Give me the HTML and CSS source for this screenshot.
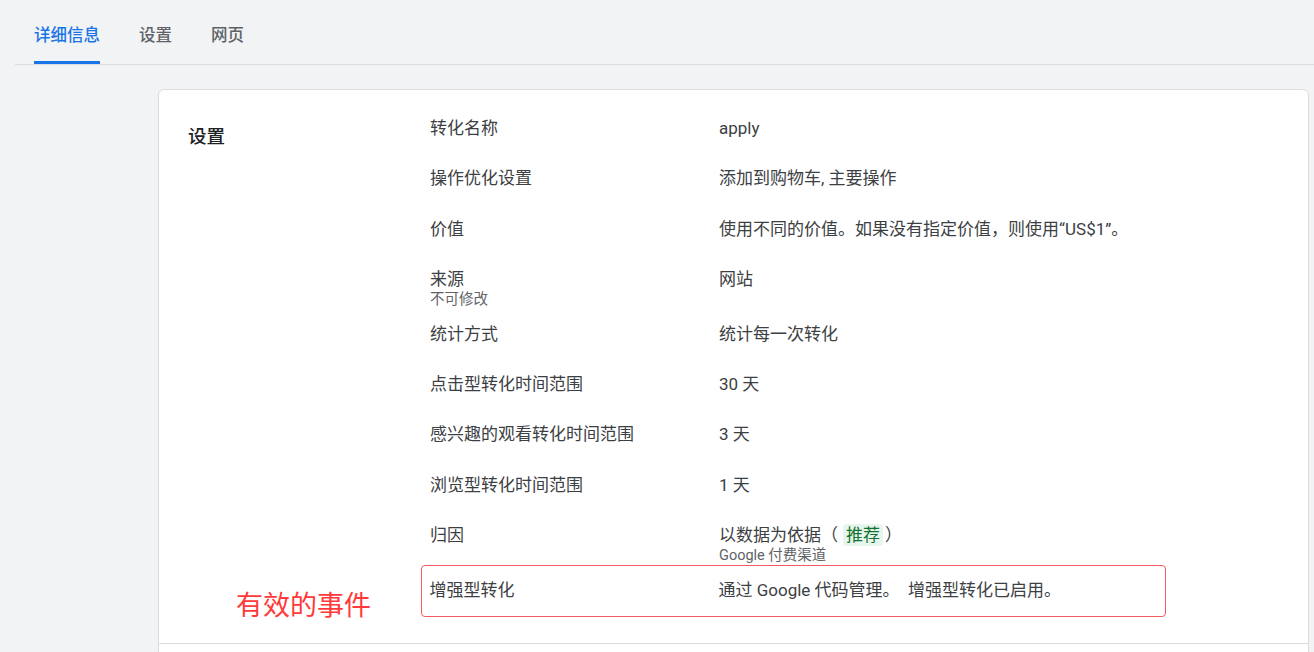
FILE: index.html
```html
<!DOCTYPE html>
<html lang="zh-CN">
<head>
  <meta charset="UTF-8" />
  <meta name="viewport" content="width=device-width, initial-scale=1.0"/>
  <title>转化操作 – apply</title>
  <link rel="stylesheet" href="styles.css">
</head>
<body>

  <div class="page">
    <!-- Záložky -->
    <div class="tabs">
      <div class="tab active"><span>详细信息</span></div>
      <div class="tab"><span>设置</span></div>
      <div class="tab"><span>网页</span></div>
    </div>

    <div class="card">
      <div class="section">
        <h2 class="section-title">设置</h2>

        <div class="rows">
          <div class="row">
            <div class="label">转化名称</div>
            <div class="value">apply</div>
          </div>
          <div class="row">
            <div class="label">操作优化设置</div>
            <div class="value">添加到购物车, 主要操作</div>
          </div>
          <div class="row">
            <div class="label">价值</div>
            <div class="value">使用不同的价值。如果没有指定价值，则使用“US$1”。</div>
          </div>
          <div class="row">
            <div class="label">来源<div class="sub">不可修改</div></div>
            <div class="value">网站</div>
          </div>
          <div class="row">
            <div class="label">统计方式</div>
            <div class="value">统计每一次转化</div>
          </div>
          <div class="row">
            <div class="label">点击型转化时间范围</div>
            <div class="value">30 天</div>
          </div>
          <div class="row">
            <div class="label">感兴趣的观看转化时间范围</div>
            <div class="value">3 天</div>
          </div>
          <div class="row">
            <div class="label">浏览型转化时间范围</div>
            <div class="value">1 天</div>
          </div>
          <div class="row">
            <div class="label">归因</div>
            <div class="value">以数据为依据（<span class="chip">推荐</span>）<div class="sub">Google 付费渠道</div></div>
          </div>
          <div class="row highlight">
            <div class="label">增强型转化</div>
            <div class="value">通过 Google 代码管理。&nbsp; 增强型转化已启用。</div>
          </div>
        </div>

        <!-- poznámka -->
        <div class="note">有效的事件</div>
      </div>
      <div class="section empty"></div>
    </div>
  </div>

</body>
</html>
```

FILE: styles.css
```css
* {
  margin: 0;
  padding: 0;
  box-sizing: border-box;
}
body, html {
  height: 100%;
  overflow: hidden;
  font-family: Roboto, 'Noto Sans CJK SC', sans-serif;
}

body {
  background: #f1f3f4;
  color: #3c4043;
}

.page {
  padding-left: 14.5px;
}

/* Záložky */
.tabs {
  display: flex;
  border-bottom: 1px solid #dadce0;
}
.tab {
  padding: 24px 19.5px 0;
  font-size: 16.5px;
  font-weight: 500;
  color: #5f6368;
}
.tab span {
  display: block;
  line-height: 24px;
  padding-bottom: 13px;
  border-bottom: 3px solid transparent;
}
.tab.active span {
  color: #1a73e8;
  border-bottom-color: #1a73e8;
  border-radius: 2px 2px 0 0;
}

/* Karta */
.card {
  background: #fff;
  border: 1px solid #dadce0;
  border-radius: 6px;
  margin: 24px 5px 0 143.5px;
}
.section {
  position: relative;
  display: flex;
  padding: 13px 0 26px 29px;
  border-bottom: 1px solid #dadce0;
}
.section.empty {
  height: 200px;
  border-bottom: none;
}
.section-title {
  width: 242px;
  flex-shrink: 0;
  padding-top: 22px;
  font-size: 18.5px;
  line-height: 24px;
  font-weight: 500;
  color: #202124;
}
.rows {
  display: flex;
  flex-direction: column;
}
.row {
  display: flex;
  min-height: 50.3px;
  padding-top: 13px;
  font-size: 17px;
  line-height: 24px;
}
.label {
  width: 289px;
  flex-shrink: 0;
}
.value {
  white-space: nowrap;
}
.sub {
  font-size: 14.5px;
  line-height: 18px;
  color: #5f6368;
}
.chip {
  display: inline-block;
  background: #e8f5ec;
  color: #137333;
  line-height: 22px;
  padding: 0 3px;
  margin: 0 2px 0 5px;
  border-radius: 4px;
}

.row.highlight {
  width: 745px;
  min-height: 52px;
  margin-left: -9px;
  padding: 12px 0 0 7.5px;
  border: 1.5px solid #f25c60;
  border-radius: 4px;
}

.note {
  position: absolute;
  left: 77px;
  top: 500px;
  font-size: 27px;
  line-height: 32px;
  color: #ff3a3a;
}
```
